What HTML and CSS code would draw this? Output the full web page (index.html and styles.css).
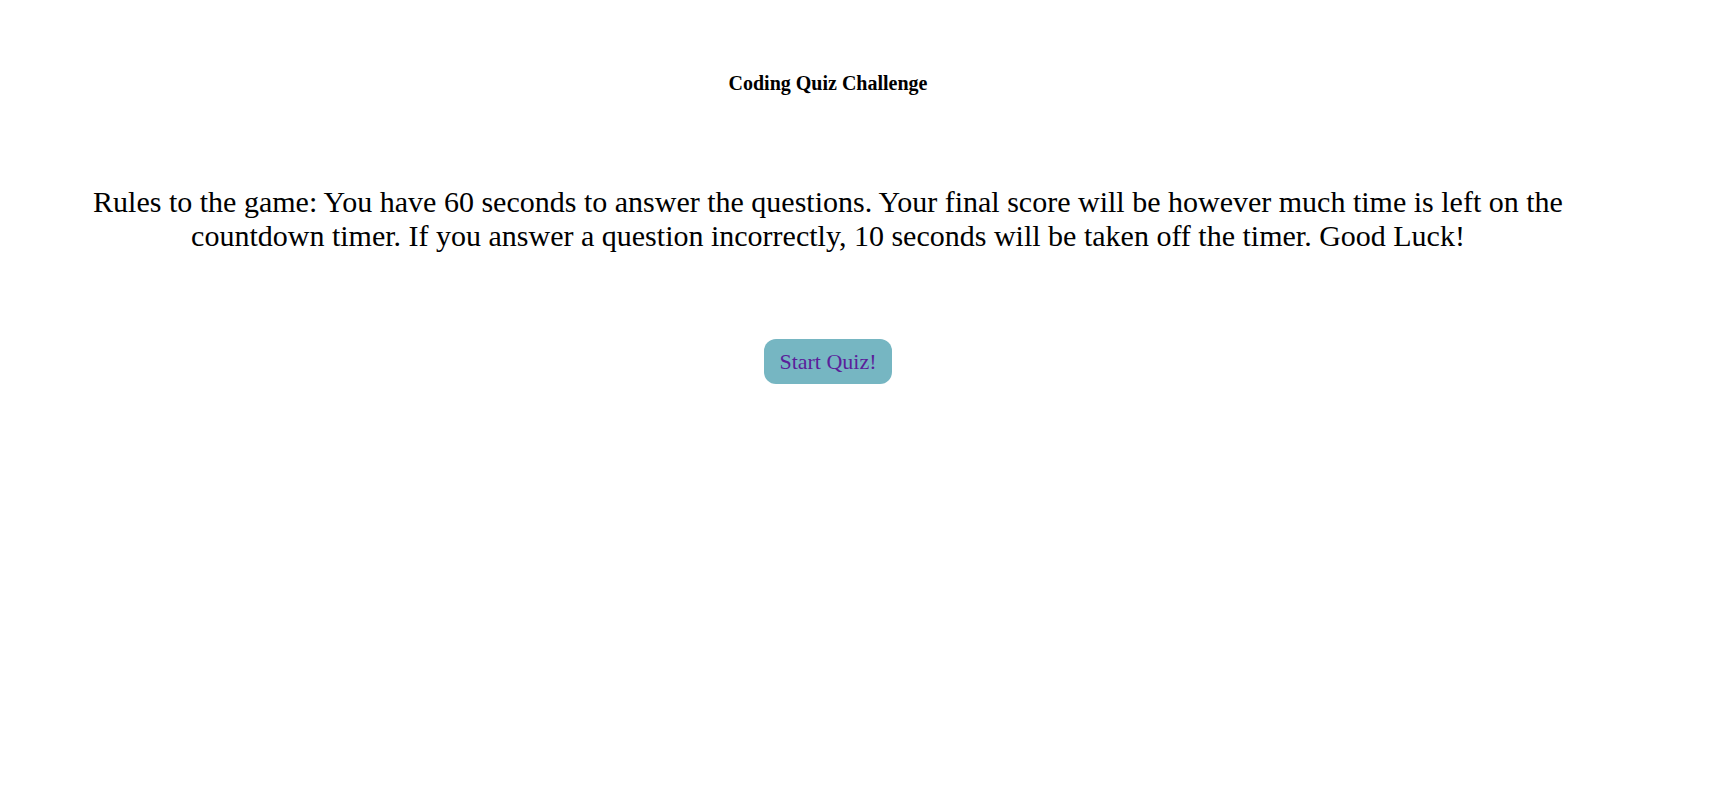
FILE: index.html
```html
<!DOCTYPE html>
<html>
<head>
<meta charset="utf-8">
<title>Coding Quiz</title>
<link rel="stylesheet" href="styles.css">
</head>
<body>
<div class="page">
  <header class="header">
    <h1 class="title">Coding Quiz Challenge</h1>
  </header>
  <main class="main">
    <p class="rules">Rules to the game: You have 60 seconds to answer the questions. Your final score will be however much time is left on the countdown timer. If you answer a question incorrectly, 10 seconds will be taken off the timer. Good Luck!</p>
    <button class="start">Start Quiz!</button>
  </main>
</div>
</body>
</html>
```

FILE: styles.css
```css
html, body {
  margin: 0;
  padding: 0;
  background: #ffffff;
}
body {
  font-family: "Liberation Serif", "Times New Roman", serif;
  color: #000000;
}
.page {
  width: 1640px;
  margin-left: 8px;
  display: flex;
  flex-direction: column;
  align-items: center;
  text-align: center;
}
.header {
  padding-top: 72px;
}
.title {
  margin: 0;
  font-size: 20px;
  font-weight: bold;
  line-height: 23px;
}
.main {
  display: flex;
  flex-direction: column;
  align-items: center;
  padding-top: 90px;
}
.rules {
  margin: 0;
  width: 1520px;
  font-size: 30px;
  line-height: 34px;
}
.start {
  margin-top: 86px;
  width: 128px;
  height: 45px;
  border: none;
  border-radius: 12px;
  background: #76b6c2;
  color: #5b1f9a;
  font-family: "Liberation Serif", "Times New Roman", serif;
  font-size: 22px;
  padding: 0;
}
```
